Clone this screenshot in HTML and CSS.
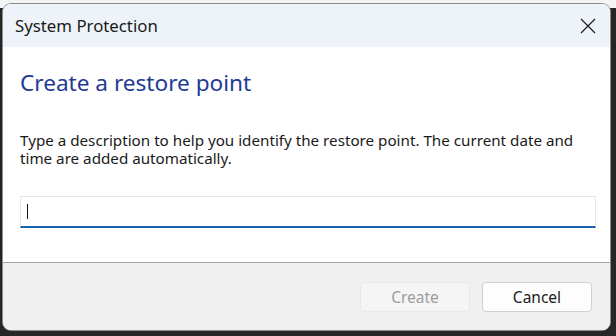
FILE: index.html
```html
<!DOCTYPE html>
<html lang="en">
<head>
<meta charset="utf-8">
<title>System Protection</title>
<link rel="stylesheet" href="styles.css">
</head>
<body>
<div class="dialog">
  <div class="titlebar">
    <span class="title">System Protection</span>
    <button class="close" aria-label="Close">
      <svg width="16" height="16" viewBox="0 0 16 16"><path d="M1 1 L15 15 M15 1 L1 15" stroke="#1a1a1a" stroke-width="1.2" fill="none"/></svg>
    </button>
  </div>
  <div class="content">
    <h1 class="heading">Create a restore point</h1>
    <p class="desc">Type a description to help you identify the restore point. The current date and time are added automatically.</p>
    <div class="field"><span class="caret"></span></div>
  </div>
  <div class="footer">
    <button class="btn btn-disabled">Create</button>
    <button class="btn">Cancel</button>
  </div>
</div>
</body>
</html>
```
FILE: styles.css
```css
html, body {
  margin: 0;
  height: 336px;
  overflow: hidden;
}
body {
  box-sizing: border-box;
  padding: 4px 6px 6px 3px;
  background: linear-gradient(#f4f4f4 0 8px, #262626 8px);
  font-family: "Noto Sans", "Liberation Sans", sans-serif;
  color: #1a1a1a;
}
.dialog {
  height: 326px;
  display: flex;
  flex-direction: column;
  border-radius: 8px;
  overflow: hidden;
  background: #fff;
  box-shadow: 0 0 0 1px #8c8c8c;
}
.titlebar {
  height: 43px;
  flex: none;
  display: flex;
  align-items: center;
  justify-content: space-between;
  padding: 0 14px 0 12px;
  background: #edf3f8;
}
.title {
  font-size: 16.8px;
  color: #1a1a1a;
}
.close {
  border: 0;
  background: transparent;
  padding: 0;
  width: 16px;
  height: 16px;
  display: flex;
}
.content {
  flex: 1;
  padding: 0 14px 0 17px;
  display: flex;
  flex-direction: column;
}
.heading {
  margin: 21px 0 0;
  font-size: 22.6px;
  line-height: 30px;
  font-weight: 400;
  color: #1e3a93;
}
.desc {
  margin: 33px 0 0;
  font-size: 15.2px;
  line-height: 18px;
  color: #1a1a1a;
}
.field {
  margin-top: 29px;
  height: 29px;
  border: 1px solid #e6e6e6;
  border-bottom: 2px solid #1b62ad;
  display: flex;
  align-items: center;
  padding-left: 6px;
}
.caret {
  width: 1px;
  height: 15px;
  background: #111;
}
.footer {
  height: 68px;
  flex: none;
  box-sizing: border-box;
  border-top: 1px solid #a6a6a6;
  background: #f0f0f0;
  display: flex;
  justify-content: flex-end;
  align-items: flex-start;
  gap: 12px;
  padding: 19px 18px 0 0;
}
.btn {
  width: 110px;
  height: 30px;
  border: 1px solid #d0d0d0;
  border-radius: 4px;
  background: #fdfdfd;
  font-family: "Noto Sans", "Liberation Sans", sans-serif;
  font-size: 15.5px;
  color: #1a1a1a;
  padding: 0;
}
.btn-disabled {
  background: #f5f5f5;
  border-color: #e8e8e8;
  color: #9d9d9d;
}
```
